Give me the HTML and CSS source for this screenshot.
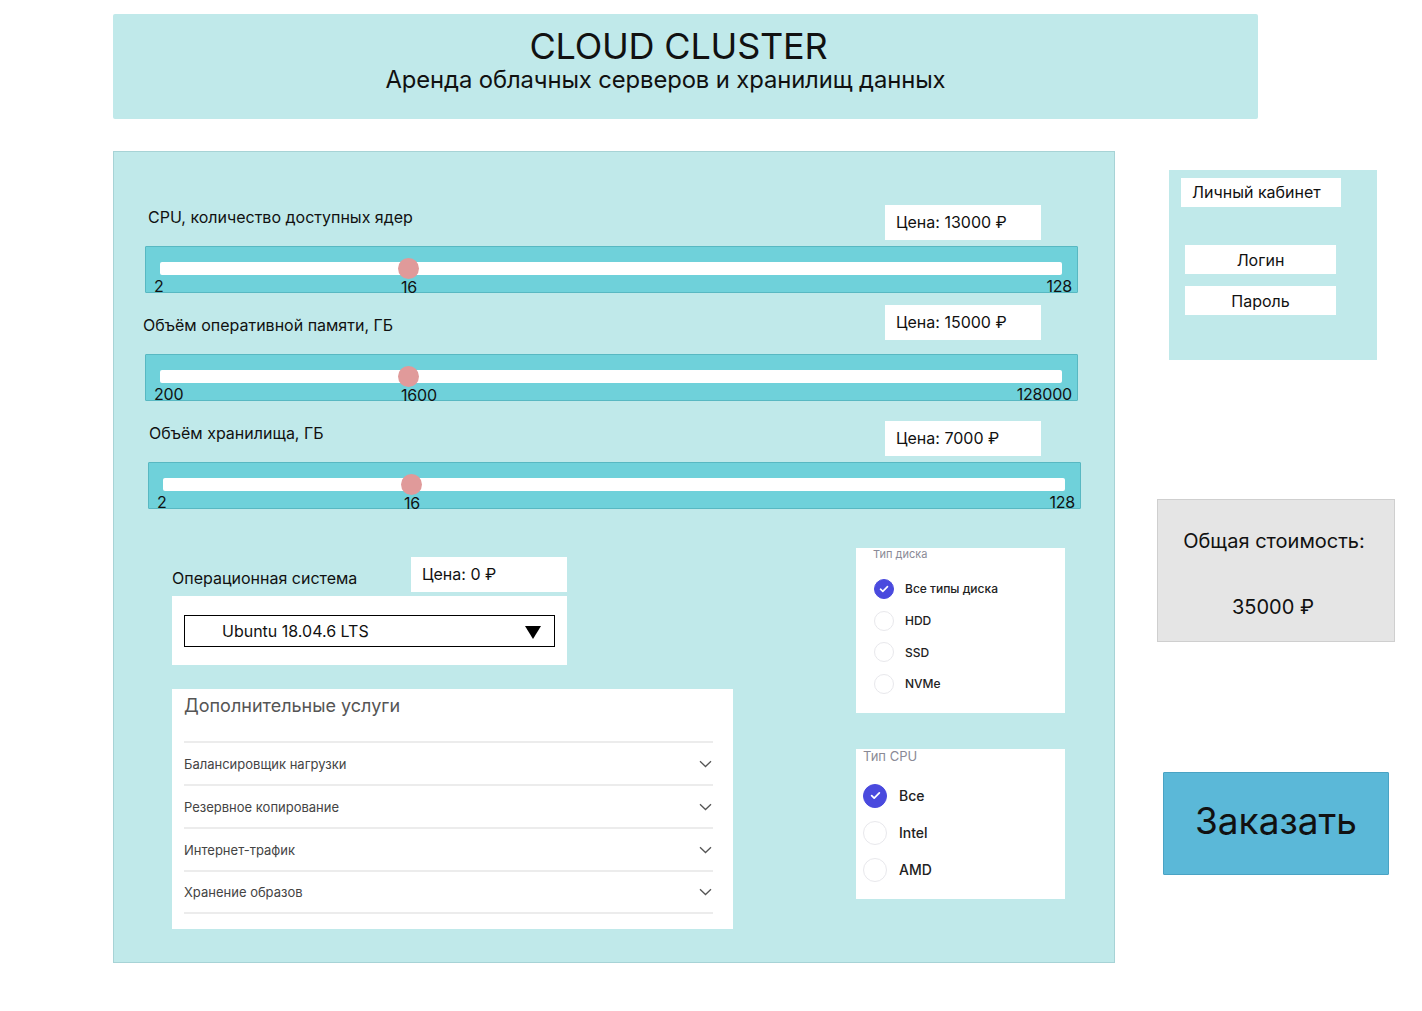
FILE: index.html
```html
<!DOCTYPE html>
<html lang="ru">
<head>
<meta charset="utf-8">
<title>Cloud Cluster</title>
<link rel="stylesheet" href="styles.css">
</head>
<body>
<div class="page">
  <header class="hero">
    <h1 class="hero-title">CLOUD CLUSTER</h1>
    <p class="hero-sub">Аренда облачных серверов и хранилищ данных</p>
  </header>

  <div class="layout">
    <main class="config">
      <section class="param param-cpu">
        <div class="param-head">
          <span class="param-label">CPU, количество доступных ядер</span>
          <span class="price">Цена: 13000 ₽</span>
        </div>
        <div class="track">
          <div class="rail">
            <div class="bar"></div>
            <span class="thumb" style="left:27.5%"></span>
            <span class="val" style="left:27.5%">16</span>
          </div>
          <div class="ends"><span>2</span><span>128</span></div>
        </div>
      </section>

      <section class="param param-ram">
        <div class="param-head">
          <span class="param-label">Объём оперативной памяти, ГБ</span>
          <span class="price">Цена: 15000 ₽</span>
        </div>
        <div class="track">
          <div class="rail">
            <div class="bar"></div>
            <span class="thumb" style="left:27.5%"></span>
            <span class="val" style="left:27.5%">1600</span>
          </div>
          <div class="ends"><span>200</span><span>128000</span></div>
        </div>
      </section>

      <section class="param param-disk">
        <div class="param-head">
          <span class="param-label">Объём хранилища, ГБ</span>
          <span class="price">Цена: 7000 ₽</span>
        </div>
        <div class="track">
          <div class="rail">
            <div class="bar"></div>
            <span class="thumb" style="left:27.5%"></span>
            <span class="val" style="left:27.5%">16</span>
          </div>
          <div class="ends"><span>2</span><span>128</span></div>
        </div>
      </section>

      <div class="lower">
        <div class="lower-left">
          <div class="os-head">
            <span class="os-label">Операционная система</span>
            <span class="price">Цена: 0 ₽</span>
          </div>
          <div class="os-box">
            <div class="select">
              <span class="select-text">Ubuntu 18.04.6 LTS</span>
              <svg class="select-arrow" width="16" height="13" viewBox="0 0 16 13"><polygon points="0,0 16,0 8,13" fill="#000"/></svg>
            </div>
          </div>

          <div class="services">
            <div class="services-title">Дополнительные услуги</div>
            <div class="svc-row"><span>Балансировщик нагрузки</span><svg class="chev" width="13" height="8" viewBox="0 0 13 8"><path d="M1 1.2l5.5 5.3 5.5-5.3" fill="none" stroke="#555" stroke-width="1.3"/></svg></div>
            <div class="svc-row"><span>Резервное копирование</span><svg class="chev" width="13" height="8" viewBox="0 0 13 8"><path d="M1 1.2l5.5 5.3 5.5-5.3" fill="none" stroke="#555" stroke-width="1.3"/></svg></div>
            <div class="svc-row"><span>Интернет-трафик</span><svg class="chev" width="13" height="8" viewBox="0 0 13 8"><path d="M1 1.2l5.5 5.3 5.5-5.3" fill="none" stroke="#555" stroke-width="1.3"/></svg></div>
            <div class="svc-row svc-last"><span>Хранение образов</span><svg class="chev" width="13" height="8" viewBox="0 0 13 8"><path d="M1 1.2l5.5 5.3 5.5-5.3" fill="none" stroke="#555" stroke-width="1.3"/></svg></div>
          </div>
        </div>

        <div class="lower-right">
          <div class="filter filter-disk">
            <div class="filter-title">Тип диска</div>
            <div class="opt"><span class="radio on"><svg width="10" height="8" viewBox="0 0 10 8"><path d="M1.5 4.2l2.3 2.2 4.7-4.8" fill="none" stroke="#fff" stroke-width="1.6" stroke-linecap="round" stroke-linejoin="round"/></svg></span><span>Все типы диска</span></div>
            <div class="opt"><span class="radio"></span><span>HDD</span></div>
            <div class="opt"><span class="radio"></span><span>SSD</span></div>
            <div class="opt"><span class="radio"></span><span>NVMe</span></div>
          </div>
          <div class="filter filter-cpu">
            <div class="filter-title">Тип CPU</div>
            <div class="opt"><span class="radio on"><svg width="11" height="9" viewBox="0 0 10 8"><path d="M1.5 4.2l2.3 2.2 4.7-4.8" fill="none" stroke="#fff" stroke-width="1.6" stroke-linecap="round" stroke-linejoin="round"/></svg></span><span>Все</span></div>
            <div class="opt"><span class="radio"></span><span>Intel</span></div>
            <div class="opt"><span class="radio"></span><span>AMD</span></div>
          </div>
        </div>
      </div>
    </main>

    <aside class="side">
      <div class="account">
        <div class="account-title">Личный кабинет</div>
        <div class="field field-first">Логин</div>
        <div class="field">Пароль</div>
      </div>
      <div class="total">
        <div class="total-label">Общая стоимость:</div>
        <div class="total-value">35000 ₽</div>
      </div>
      <button class="order">Заказать</button>
    </aside>
  </div>
</div>
</body>
</html>
```

FILE: styles.css
```css
* { box-sizing: border-box; }

html, body {
  margin: 0;
  padding: 0;
  background: #ffffff;
}

body {
  font-family: Inter, "Liberation Sans", sans-serif;
  color: #111;
}

.page {
  padding: 14px 0 0 113px;
}

/* Header */
.hero {
  width: 1145px;
  height: 105px;
  background: #c0e9ea;
  border-radius: 2px;
  text-align: center;
  padding-top: 12px;
}

.hero-title {
  margin: 0;
  padding-right: 14px;
  font-weight: 400;
  font-size: 36px;
  line-height: 40px;
  letter-spacing: -0.2px;
}

.hero-sub {
  margin: 0;
  padding-right: 40px;
  font-size: 23.8px;
  line-height: 28px;
  letter-spacing: -0.1px;
}

/* Layout */
.layout {
  display: flex;
  align-items: flex-start;
}

.config {
  width: 1002px;
  margin-top: 32px;
  background: #c0e9ea;
  border: 1px solid #a7d3d6;
  padding: 53px 0 33px 31px;
}

/* Slider params */
.param-head {
  width: 933px;
  height: 35px;
  padding-right: 37px;
  display: flex;
  justify-content: space-between;
  align-items: flex-start;
}

.param-label {
  font-size: 16px;
  line-height: 20px;
  margin-top: 2px;
}

.param-cpu .param-label { margin-left: 3px; }
.param-ram .param-label { margin-left: -2px; margin-top: 10px; }
.param-disk .param-label { margin-left: 4px; }

.param-ram { margin-top: 12px; }
.param-disk { margin-top: 20px; }

.price {
  width: 156px;
  height: 35px;
  background: #fff;
  font-size: 16px;
  line-height: 35px;
  padding-left: 11px;
  white-space: nowrap;
}

.track {
  width: 933px;
  height: 47px;
  margin-top: 6px;
  background: #6fd1da;
  border: 1px solid #58b8c2;
  border-radius: 1px;
  padding-top: 15px;
}

.param-ram .track { margin-top: 14px; }
.param-disk .track { margin-left: 3px; }

.rail {
  position: relative;
  margin: 0 15px 0 14px;
  height: 13px;
}

.bar {
  height: 13px;
  background: #fff;
  border-radius: 2px;
}

.thumb {
  position: absolute;
  top: -4px;
  width: 21px;
  height: 21px;
  margin-left: -10px;
  border-radius: 50%;
  background: #e09a9a;
}

.val {
  position: absolute;
  top: 16px;
  margin-left: -7px;
  font-size: 16px;
  line-height: 18px;
  letter-spacing: -0.2px;
}

.ends {
  display: flex;
  justify-content: space-between;
  padding: 0 5px 0 8px;
  margin-top: 3px;
  font-size: 16px;
  line-height: 17px;
  height: 14px;
  letter-spacing: -0.2px;
}

/* Lower area */
.lower {
  display: flex;
  align-items: flex-start;
  margin-top: 39px;
}

.lower-left {
  width: 561px;
  margin-left: 27px;
  margin-top: 9px;
}

.os-head {
  width: 395px;
  height: 35px;
  display: flex;
  justify-content: space-between;
  align-items: flex-start;
}

.os-label {
  font-size: 16px;
  line-height: 20px;
  margin-top: 11px;
}

.os-box {
  width: 395px;
  margin-top: 4px;
  background: #fff;
  padding: 19px 12px 18px;
}

.select {
  height: 32px;
  border: 1px solid #000;
  display: flex;
  align-items: center;
  justify-content: space-between;
  padding: 0 13px 0 37px;
}

.select-text {
  font-size: 16px;
}

.select-arrow {
  display: block;
  margin-top: 3px;
}

.services {
  margin-top: 24px;
  background: #fff;
  padding: 0 20px 15px 12px;
}

.services-title {
  height: 52px;
  padding-top: 6px;
  font-size: 18px;
  line-height: 22px;
  color: #555;
}

.svc-row {
  height: 43px;
  border-top: 2px solid #ececec;
  display: flex;
  align-items: center;
  justify-content: space-between;
  font-size: 13px;
  color: #444;
  padding-right: 1px;
}

.svc-last {
  border-bottom: 2px solid #ececec;
  height: 44px;
}

.chev { display: block; }

.lower-right {
  width: 209px;
  margin-left: 123px;
}

.filter {
  background: #fff;
}

.filter-disk {
  height: 165px;
  padding-left: 17px;
}

.filter-disk .filter-title {
  font-size: 11px;
  line-height: 12px;
  color: #8a8a96;
  margin-bottom: 13px;
}

.opt {
  display: flex;
  align-items: center;
  color: #222;
  font-weight: 500;
}

.filter-disk .opt {
  height: 31.7px;
  font-size: 12px;
  gap: 11px;
  padding-left: 1px;
}

.radio {
  flex: none;
  border-radius: 50%;
  border: 1.5px solid #e8e8ec;
  display: flex;
  align-items: center;
  justify-content: center;
}

.radio.on {
  background: #4a4ade;
  border-color: #4a4ade;
}

.filter-disk .radio {
  width: 20px;
  height: 20px;
}

.filter-cpu {
  height: 150px;
  margin-top: 36px;
  padding-left: 7px;
}

.filter-cpu .filter-title {
  font-size: 13px;
  line-height: 14px;
  color: #8a8a96;
  margin-bottom: 14px;
}

.filter-cpu .opt {
  height: 37px;
  font-size: 14px;
  gap: 12px;
}

.filter-cpu .radio {
  width: 24px;
  height: 24px;
}

/* Side */
.side {
  width: 238px;
  margin-left: 42px;
}

.account {
  width: 208px;
  height: 190px;
  margin: 51px 0 0 12px;
  background: #c0e9ea;
  padding-top: 8px;
}

.account-title {
  width: 160px;
  height: 29px;
  margin-left: 12px;
  background: #fff;
  font-size: 16px;
  line-height: 29px;
  padding-left: 11px;
}

.field {
  width: 151px;
  height: 29px;
  margin-left: 16px;
  margin-top: 12px;
  background: #fff;
  font-size: 16px;
  line-height: 31px;
  text-align: center;
}

.field-first { margin-top: 38px; }

.total {
  width: 238px;
  height: 143px;
  margin-top: 139px;
  background: #e5e5e5;
  border: 1px solid #cfcfcf;
  text-align: center;
  padding-top: 29px;
  font-size: 20px;
  line-height: 24px;
}

.total-label {
  margin-left: -4px;
}

.total-value {
  margin-top: 42px;
  margin-left: -6px;
}

.order {
  display: block;
  width: 226px;
  height: 103px;
  margin: 130px 0 0 6px;
  background: #5bb8d8;
  border: 1px solid #4aa3c4;
  border-radius: 1px;
  font-family: Inter, "Liberation Sans", sans-serif;
  font-size: 37px;
  color: #111;
  padding: 0 0 6px;
  cursor: pointer;
}
```
